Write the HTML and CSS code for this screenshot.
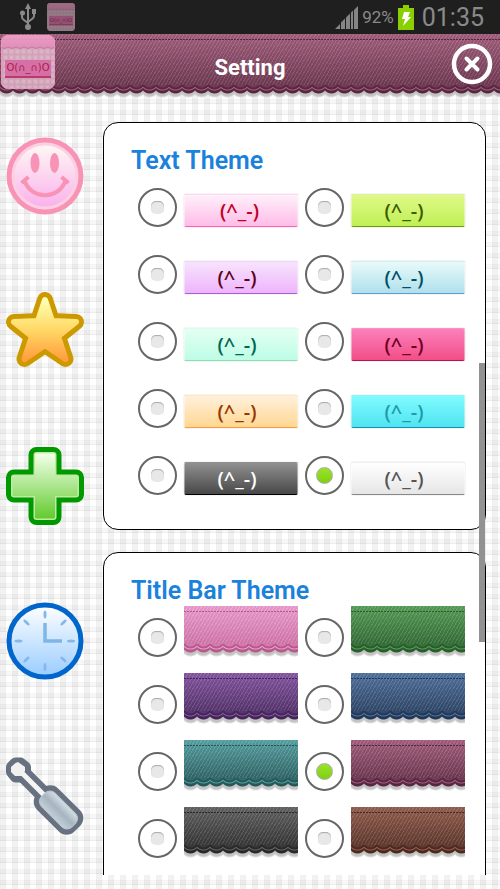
FILE: index.html
```html
<!DOCTYPE html>
<html lang="en">
<head>
  <meta charset="UTF-8" />
  <meta name="viewport" content="width=device-width, initial-scale=1" />
  <title>Setting</title>
  <link rel="stylesheet" href="styles.css">
</head>
<body>
  <!-- shared shapes -->
  <svg width="0" height="0" class="defs" aria-hidden="true">
    <defs>
      <linearGradient id="g-app" x1="0" y1="0" x2="0" y2="1">
        <stop offset="0" stop-color="#f3a3cd" /><stop offset="1" stop-color="#e794c0" />
      </linearGradient>
      <linearGradient id="g-smile" x1="0" y1="0" x2="0" y2="1">
        <stop offset="0" stop-color="#fff8f4" /><stop offset="1" stop-color="#fab0ec" />
      </linearGradient>
      <linearGradient id="g-star" x1="0" y1="0" x2="0" y2="1">
        <stop offset="0" stop-color="#ffffb0" /><stop offset=".5" stop-color="#ffd966" /><stop offset="1" stop-color="#ff9f40" />
      </linearGradient>
      <linearGradient id="g-plus" x1="0" y1="0" x2="0" y2="1">
        <stop offset="0" stop-color="#f0ffe6" /><stop offset="1" stop-color="#66cc33" />
      </linearGradient>
      <linearGradient id="g-clock" x1="0" y1="0" x2="0" y2="1">
        <stop offset="0" stop-color="#ffffff" /><stop offset="1" stop-color="#99ccff" />
      </linearGradient>
      <linearGradient id="g-tool" x1="0" y1="0" x2="0" y2="1">
        <stop offset="0" stop-color="#d5dfe5" /><stop offset=".5" stop-color="#a5b4bf" /><stop offset="1" stop-color="#c5d1d9" />
      </linearGradient>
      <pattern id="p-check" width="6" height="6" patternUnits="userSpaceOnUse">
        <rect width="6" height="6" fill="#e3c0d0" />
        <path d="M0 1.500h6M1.500 0v6" stroke="#dbabc1" stroke-width="2" />
      </pattern>
      <symbol id="app-icon" viewBox="0 0 54 54">
        <rect width="54" height="54" rx="7" fill="url(#p-check)" />
        <path d="M0 12V7a7 7 0 0 1 7-7h40a7 7 0 0 1 7 7v5q-4 3-7 0-4 3-8 0-4 3-8 0-4 3-8 0-4 3-8 0-4 3-8 0-3 3-8 0z" fill="url(#g-app)" stroke="#c77fa5" />
        <rect x="4" y="25" width="46" height="17" fill="#e074ae" />
        <path d="M4 42h46" stroke="#c23a72" stroke-width="2" />
        <text x="27" y="36" text-anchor="middle" font-family="DejaVu Sans, sans-serif" font-size="10" fill="#b01848">O(∩_∩)O</text>
        <rect x=".5" y=".5" width="53" height="53" rx="7" fill="none" stroke="#efa6c8" />
      </symbol>
    </defs>
  </svg>

  <div class="status-bar">
    <svg class="usb" viewBox="0 0 16 28" aria-hidden="true">
      <path d="M8 4v20M2 10v4q0 2 2 3l4 3M14 10v3q0 2-2 3l-4 3" fill="none" stroke="#8a8a8a" stroke-width="2" />
      <path d="M8 0l3 6H5z" fill="#8a8a8a" />
      <circle cx="8" cy="24" r="3" fill="#8a8a8a" />
      <circle cx="2.500" cy="10" r="2.500" fill="#8a8a8a" />
      <path d="M12 6h4v5h-4z" fill="#8a8a8a" />
    </svg>
    <svg class="notice" aria-hidden="true"><use href="#app-icon" /></svg>
    <span class="spacer"></span>
    <svg class="signal" viewBox="0 0 23 23" aria-hidden="true">
      <path d="M0 23L5 18V23zM6 23V16.500L10 12.500V23zM11 23V11.500L15 7.500V23zM16 23V6.500L18 4.500V23zM19 23V4L23 0V23z" fill="#858585" />
    </svg>
    <span class="percent">92%</span>
    <svg class="battery" viewBox="0 0 16 25" aria-hidden="true">
      <path d="M5 0h6v3h5v22H0V3h5z" fill="#8ad000" />
      <path d="M6 7h6l-2 5h3l-8 9 2-7H4z" fill="#fff" />
    </svg>
    <span class="clock">01:35</span>
  </div>

  <header class="title-bar fabric wine">
    <svg class="logo" aria-hidden="true"><use href="#app-icon" /></svg>
    <h1>Setting</h1>
    <button class="close" aria-label="Close">
      <svg viewBox="0 0 42 42">
        <circle cx="21" cy="21" r="18" fill="none" stroke="#fff" stroke-width="4.500" />
        <path d="M15.500 15.500l11 11M26.500 15.500l-11 11" stroke="#fff" stroke-width="4" stroke-linecap="round" />
      </svg>
    </button>
  </header>

  <main>
    <nav class="tabs">
      <button aria-label="Faces">
        <svg viewBox="0 0 78 78">
          <circle cx="39" cy="39" r="38.500" fill="#f893b5" />
          <circle cx="39" cy="39" r="32" fill="url(#g-smile)" stroke="#fdcfe2" stroke-width="3" />
          <ellipse cx="29" cy="26" rx="4.500" ry="10" fill="#f893b5" />
          <ellipse cx="48.500" cy="26" rx="4.500" ry="10" fill="#f893b5" />
          <path d="M18.500 43.500C25 63 53 63 59.500 43.500M15.500 46l7-6M62.500 46l-7-6" fill="none" stroke="#f893b5" stroke-width="4" />
        </svg>
      </button>
      <button aria-label="Favorites">
        <svg viewBox="0 0 78 78" stroke-linejoin="round">
          <path d="M39 8L46 29 70 30 52 44.500 59.500 67 39 53 18.500 67 26 44.500 8 30 32 29z" fill="#cc9900" stroke="#cc9900" stroke-width="16" />
          <path d="M39 8L46 29 70 30 52 44.500 59.500 67 39 53 18.500 67 26 44.500 8 30 32 29z" fill="url(#g-star)" stroke="url(#g-star)" stroke-width="6" />
        </svg>
      </button>
      <button aria-label="Add">
        <svg viewBox="0 0 78 78" stroke-linejoin="round">
          <path d="M30.500 8h17v22.500H70v17H47.500V70h-17V47.500H8v-17h22.500z" fill="#009900" stroke="#009900" stroke-width="16" />
          <path d="M30.500 8h17v22.500H70v17H47.500V70h-17V47.500H8v-17h22.500z" fill="#bfe9a6" stroke="#bfeaa5" stroke-width="6" />
          <path d="M30.500 8h17v22.500H70v17H47.500V70h-17V47.500H8v-17h22.500z" fill="url(#g-plus)" stroke="url(#g-plus)" stroke-width="3" />
        </svg>
      </button>
      <button aria-label="History">
        <svg viewBox="0 0 78 78">
          <circle cx="39" cy="39" r="36" fill="url(#g-clock)" stroke="#0066cc" stroke-width="5" />
          <g fill="#85b8ea">
            <ellipse cx="39" cy="12.500" rx="1.500" ry="4" />
            <ellipse cx="39" cy="65" rx="1.500" ry="4" />
            <ellipse cx="12.500" cy="39" rx="4" ry="1.500" />
            <ellipse cx="65" cy="39" rx="4" ry="1.500" />
            <ellipse cx="20.500" cy="20.500" rx="4" ry="1.500" transform="rotate(45 20.500 20.500)" />
            <ellipse cx="57.500" cy="57.500" rx="4" ry="1.500" transform="rotate(45 57.500 57.500)" />
            <ellipse cx="57.500" cy="20.500" rx="4" ry="1.500" transform="rotate(-45 57.500 20.500)" />
            <ellipse cx="20.500" cy="57.500" rx="4" ry="1.500" transform="rotate(-45 20.500 57.500)" />
          </g>
          <path d="M39 21v18h17" fill="none" stroke="#80b5e8" stroke-width="3.500" />
        </svg>
      </button>
      <button aria-label="Tools">
        <svg viewBox="0 0 78 78" stroke-linejoin="round">
          <path d="M16 16L42 42" stroke="#687180" stroke-width="16" />
          <path d="M9.500 6h5l5 4v5l-5 5h-5l-4-5v-5z" fill="#687180" stroke="#687180" stroke-width="11" />
          <rect x="26" y="38" width="53" height="30" rx="11" fill="#687180" transform="rotate(45 52.500 53)" />
          <path d="M9.500 6L12 5l7 5v4l-4 5H9l-4-4v-5z" fill="#f1f1f1" />
          <path d="M16 16L38 38" stroke="#f4f4f4" stroke-width="5" />
          <rect x="31" y="43.500" width="43" height="19" rx="7" fill="url(#g-tool)" stroke="#b9c6cf" transform="rotate(45 52.500 53)" />
        </svg>
      </button>
    </nav>

    <div class="content">
      <div class="scroll">
        <section class="panel">
          <h2>Text Theme</h2>
          <div class="options">
            <label><input type="radio" name="text" /><span class="chip pink">(^_-)</span></label>
            <label><input type="radio" name="text" /><span class="chip lime">(^_-)</span></label>
            <label><input type="radio" name="text" /><span class="chip violet">(^_-)</span></label>
            <label><input type="radio" name="text" /><span class="chip ice">(^_-)</span></label>
            <label><input type="radio" name="text" /><span class="chip mint">(^_-)</span></label>
            <label><input type="radio" name="text" /><span class="chip rose">(^_-)</span></label>
            <label><input type="radio" name="text" /><span class="chip peach">(^_-)</span></label>
            <label><input type="radio" name="text" /><span class="chip cyan">(^_-)</span></label>
            <label><input type="radio" name="text" /><span class="chip dark">(^_-)</span></label>
            <label><input type="radio" name="text" checked /><span class="chip white">(^_-)</span></label>
          </div>
        </section>

        <section class="panel">
          <h2>Title Bar Theme</h2>
          <div class="options bars">
            <label><input type="radio" name="bar" aria-label="Pink" /><span class="fabric candy"></span></label>
            <label><input type="radio" name="bar" aria-label="Green" /><span class="fabric green"></span></label>
            <label><input type="radio" name="bar" aria-label="Purple" /><span class="fabric purple"></span></label>
            <label><input type="radio" name="bar" aria-label="Blue" /><span class="fabric blue"></span></label>
            <label><input type="radio" name="bar" aria-label="Teal" /><span class="fabric teal"></span></label>
            <label><input type="radio" name="bar" aria-label="Wine" checked /><span class="fabric wine"></span></label>
            <label><input type="radio" name="bar" aria-label="Black" /><span class="fabric black"></span></label>
            <label><input type="radio" name="bar" aria-label="Brown" /><span class="fabric brown"></span></label>
          </div>
        </section>
      </div>
      <div class="scrollbar"></div>
    </div>
  </main>
</body>
</html>
```
FILE: styles.css
```css
* {
  box-sizing: border-box;
}

body {
  height: 100vh;
  margin: 0;
  display: flex;
  flex-direction: column;
  overflow: hidden;
  font-family: Roboto, "DejaVu Sans", sans-serif;
  background-color: #fff;
  background-image:
    repeating-linear-gradient(90deg, rgba(0, 0, 0, 0.06) 0 1px, rgba(0, 0, 0, 0.05) 1px 5px, rgba(0, 0, 0, 0.06) 5px 6px, transparent 6px 12px),
    repeating-linear-gradient(180deg, rgba(0, 0, 0, 0.04) 0 1px, rgba(0, 0, 0, 0.03) 1px 4px, rgba(0, 0, 0, 0.07) 4px 5px, transparent 5px 11px);
}

button {
  padding: 0;
  border: none;
  background: none;
  cursor: pointer;
}

svg {
  display: block;
}

.defs {
  position: absolute;
}

/* status bar */
.status-bar {
  flex: none;
  height: 34px;
  padding: 0 16px 0 20px;
  display: flex;
  align-items: center;
  background: #1f1f1f;
  color: #8a8a8a;
}

.usb {
  width: 16px;
  height: 28px;
}

.notice {
  width: 28px;
  height: 28px;
  margin-left: 11px;
  opacity: 0.6;
}

.spacer {
  flex: 1;
}

.signal {
  width: 23px;
  height: 23px;
}

.percent {
  margin: 0 4px;
  font-size: 17px;
}

.battery {
  width: 16px;
  height: 25px;
}

.clock {
  margin-left: 8px;
  font-size: 25px;
}

/* scalloped cloth, used by the title bar and its swatches:
   hem arcs, scallops, their shadow, stitching, twill, base colour */
.fabric {
  display: block;
  background-image:
    radial-gradient(circle at 50% -4px, var(--bottom) 6px, var(--dark) 7px 8px, var(--light) 9px, transparent 10px),
    radial-gradient(circle at 50% 0, var(--dark) 8px, transparent 9px),
    radial-gradient(circle at 50% 0, #c4c4c4 8px, transparent 10px),
    repeating-linear-gradient(90deg, var(--dark) 0 2px, transparent 2px 3px),
    repeating-linear-gradient(120deg, rgba(255, 255, 255, 0.1) 0 1px, rgba(0, 0, 0, 0.05) 1px 3px),
    linear-gradient(var(--light), var(--bottom));
  background-size:
    13px 10px,
    13px 10px,
    13px 10px,
    100% 1px,
    100% calc(100% - 13px),
    100% calc(100% - 13px);
  background-position: 0 calc(100% - 3px), 0 calc(100% - 3px), 0 100%, 0 5px, 0 0, 0 0;
  background-repeat: repeat-x, repeat-x, repeat-x, no-repeat, no-repeat, no-repeat;
}

.candy  { --light: #ee9fd2; --bottom: #d67aae; --dark: #b75a8a; }
.green  { --light: #58a058; --bottom: #37703a; --dark: #285c2b; }
.purple { --light: #8858a4; --bottom: #593670; --dark: #452558; }
.blue   { --light: #53749f; --bottom: #324a6c; --dark: #223857; }
.teal   { --light: #59a3a5; --bottom: #34696b; --dark: #24575a; }
.wine   { --light: #a5607f; --bottom: #713b54; --dark: #582640; }
.black  { --light: #646464; --bottom: #393939; --dark: #292929; }
.brown  { --light: #94604f; --bottom: #633a30; --dark: #4c281f; }

.title-bar {
  flex: none;
  height: 64px;
  padding: 1px 7px 0 1px;
  display: flex;
  align-items: flex-start;
}

.logo {
  width: 54px;
  height: 54px;
  opacity: 0.9;
}

.title-bar h1 {
  flex: 1;
  margin: 0;
  padding-right: 6px;
  font-size: 22px;
  line-height: 66px;
  text-align: center;
  color: #fff;
}

.close {
  width: 42px;
  height: 42px;
  margin-top: 8px;
}

/* page body */
main {
  flex: 1;
  min-height: 0;
  display: flex;
  padding: 24px 14px 14px 0;
}

.tabs {
  flex: none;
  width: 103px;
  padding: 15px 0 0 6px;
  display: flex;
  flex-direction: column;
  gap: 77px;
  overflow: hidden;
}

.tabs button {
  width: 78px;
  height: 78px;
  flex: none;
}

.content {
  position: relative;
  flex: 1;
}

.scroll {
  height: 100%;
  overflow: hidden;
}

.scrollbar {
  position: absolute;
  right: 1px;
  top: 32%;
  width: 6px;
  height: 37%;
  background: #929292;
}

.panel {
  margin-bottom: 22px;
  padding: 24px 20px 34px 27px;
  border: 1px solid #000;
  border-radius: 15px;
  background: #fff;
}

.panel h2 {
  margin: 0;
  font-size: 25px;
  font-weight: 600;
  line-height: 28px;
  color: #1a82dc;
}

.options {
  margin-top: 13px;
  padding-left: 7px;
  display: grid;
  grid-template-columns: 1fr 1fr;
  column-gap: 7px;
  row-gap: 28px;
}

.options label {
  display: flex;
  align-items: flex-end;
  gap: 7px;
}

.options input {
  appearance: none;
  flex: none;
  width: 39px;
  height: 39px;
  margin: 0;
  border: 2px solid #666;
  border-radius: 50%;
  background: #fff;
  display: grid;
  place-items: center;
}

.options input::before {
  content: "";
  width: 13px;
  height: 13px;
  border-radius: 5px;
  background: #e8e8e8;
  box-shadow: inset 0 1px 1px #aaa;
}

.options input:checked::before {
  width: 15px;
  height: 15px;
  border: 1px solid #b0a8b8;
  border-radius: 50%;
  background: linear-gradient(#9be32a, #7ed010);
  box-shadow: none;
}

.chip {
  flex: 1;
  height: 33px;
  padding-right: 8px;
  border: 1px solid rgba(255, 255, 255, 0.4);
  border-bottom: 1px solid var(--line);
  border-radius: 2px;
  box-shadow: 0 0 1px rgba(0, 0, 0, 0.4);
  background: linear-gradient(var(--from), var(--to));
  color: var(--ink);
  font-family: "Open Sans", sans-serif;
  font-size: 20px;
  font-weight: 600;
  line-height: 32px;
  text-align: center;
}

.pink   { --from: #fff0fa; --to: #ffbce8; --line: #ff5fae; --ink: #c00020; }
.lime   { --from: #e0f888; --to: #bff055; --line: #6f9a00; --ink: #3c5c00; }
.violet { --from: #f6e4fd; --to: #efb4fc; --line: #a55fd8; --ink: #600018; }
.ice    { --from: #e8fafa; --to: #afe0ec; --line: #5a9fd0; --ink: #005068; }
.mint   { --from: #e4fff2; --to: #bcfde6; --line: #8ae0b0; --ink: #006850; }
.rose   { --from: #fb80bc; --to: #f34e86; --line: #b01850; --ink: #700020; }
.peach  { --from: #fff0dc; --to: #ffd792; --line: #ff9a40; --ink: #983800; }
.cyan   { --from: #80fbff; --to: #50e4f2; --line: #1490a8; --ink: #209aac; }
.dark   { --from: #909090; --to: #484848; --line: #000; --ink: #fff; }
.white  { --from: #fff; --to: #e6e6e6; --line: #888; --ink: #555; }

/* the first face sits nearer the middle of its chip */
.pink {
  padding-right: 3px;
}

/* swatches are taller than the radios beside them */
.bars {
  margin-top: 1px;
  row-gap: 16px;
}

.bars .fabric {
  flex: 1;
  height: 51px;
}
```
